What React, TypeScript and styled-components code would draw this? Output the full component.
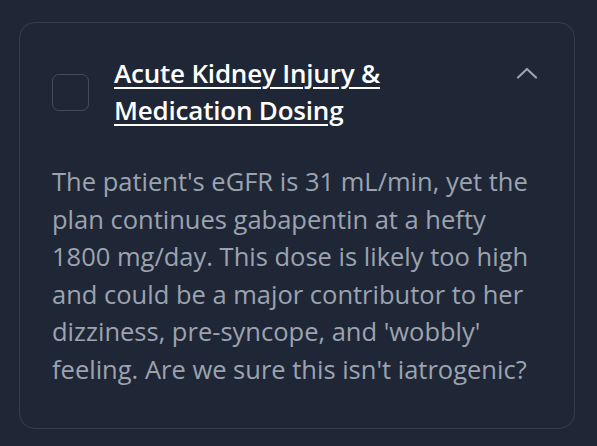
import React from "react";
import styled, { createGlobalStyle } from "styled-components";

const GlobalStyle = createGlobalStyle`
  html, body {
    margin: 0;
    padding: 0;
    background: #1f2737;
  }
  body {
    font-family: "Open Sans", "Noto Sans", sans-serif;
  }
`;

const Page = styled.div`
  padding: 22px 22px 18px 19px;
`;

const Card = styled.section`
  border: 1.5px solid #343d4d;
  border-radius: 16px;
  padding: 32px 30px 40px 32px;
`;

const Header = styled.div`
  display: flex;
  align-items: center;
  gap: 25px;
`;

const Check = styled.button`
  flex: none;
  width: 37px;
  height: 37px;
  border: 1.5px solid #434c5c;
  border-radius: 7px;
  background: transparent;
  padding: 0;
`;

const Title = styled.a`
  flex: 1;
  color: #ffffff;
  font-size: 26px;
  font-weight: 600;
  line-height: 37px;
  letter-spacing: -0.2px;
  text-decoration: underline;
  text-underline-offset: 4px;
  text-decoration-thickness: 2px;
`;

const Toggle = styled.span`
  align-self: flex-start;
  display: flex;
  margin-top: 12px;
  margin-right: 6px;
  color: #9ca3af;
`;

const Body = styled.p`
  margin: 34px 0 0;
  color: #9ca3af;
  font-size: 25.5px;
  line-height: 37.5px;
`;

export default function App() {
  return (
    <>
      <GlobalStyle />
      <Page>
        <Card>
          <Header>
            <Check aria-label="select" />
            <Title>Acute Kidney Injury &amp; Medication Dosing</Title>
            <Toggle>
              <svg width="22" height="12" viewBox="0 0 22 12" fill="none">
                <path
                  d="M2 10.5 L11 2 L20 10.5"
                  stroke="currentColor"
                  strokeWidth="2.2"
                  strokeLinecap="round"
                  strokeLinejoin="round"
                />
              </svg>
            </Toggle>
          </Header>
          <Body>
            The patient's eGFR is 31 mL/min, yet the plan continues gabapentin at
            a hefty 1800 mg/day. This dose is likely too high and could be a major
            contributor to her dizziness, pre-syncope, and 'wobbly' feeling. Are
            we sure this isn't iatrogenic?
          </Body>
        </Card>
      </Page>
    </>
  );
}
